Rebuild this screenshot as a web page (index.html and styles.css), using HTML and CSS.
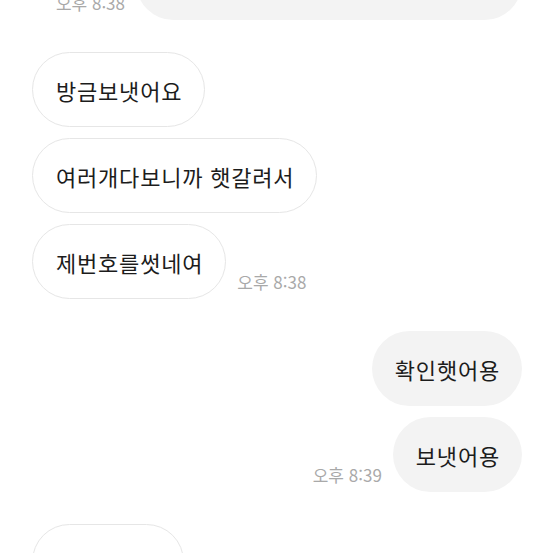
FILE: index.html
```html
<!DOCTYPE html>
<html lang="ko">

<head>
    <meta charset="UTF-8">
    <meta name="viewport" content="width=device-width, initial-scale=1.0">
    <title>Chat</title>
    <link rel="stylesheet" href="styles.css">
</head>

<body>
    <div class="chat">
        <div class="group mine">
            <div class="row">
                <span class="time">오후 8:38</span>
                <div class="bubble wide"></div>
            </div>
        </div>

        <div class="group theirs">
            <div class="row">
                <div class="bubble">방금보냇어요</div>
            </div>
            <div class="row">
                <div class="bubble">여러개다보니까 햇갈려서</div>
            </div>
            <div class="row">
                <div class="bubble">제번호를썻네여</div>
                <span class="time">오후 8:38</span>
            </div>
        </div>

        <div class="group mine">
            <div class="row">
                <div class="bubble">확인햇어용</div>
            </div>
            <div class="row">
                <span class="time">오후 8:39</span>
                <div class="bubble">보냇어용</div>
            </div>
        </div>

        <div class="group theirs">
            <div class="row">
                <div class="bubble">넵감사해요</div>
            </div>
        </div>
    </div>
</body>

</html>
```

FILE: styles.css
```css
* {
    margin: 0;
    padding: 0;
    box-sizing: border-box;
}

body {
    background: #fff;
    font-family: "Noto Sans CJK KR", "Noto Sans", sans-serif;
    color: #1c1c1c;
    overflow: hidden;
}

.chat {
    margin-top: -55px;
    padding: 0 31px 0 32px;
    display: flex;
    flex-direction: column;
    gap: 32px;
}

.group {
    display: flex;
    flex-direction: column;
    gap: 11px;
}

.row {
    display: flex;
    align-items: flex-end;
    gap: 11px;
}

.mine .row {
    justify-content: flex-end;
}

.bubble {
    height: 75px;
    padding: 0 22px 0 23px;
    border-radius: 38px;
    display: flex;
    align-items: center;
    font-size: 22px;
    letter-spacing: 0.8px;
    white-space: nowrap;
}

.theirs .bubble {
    background: #fff;
    border: 1px solid #e6e6e6;
}

.mine .bubble {
    background: #f3f3f3;
}

.bubble.wide {
    width: 386px;
}

.time {
    font-size: 17px;
    color: #a9a9a9;
    margin-bottom: 5px;
    white-space: nowrap;
}
```
